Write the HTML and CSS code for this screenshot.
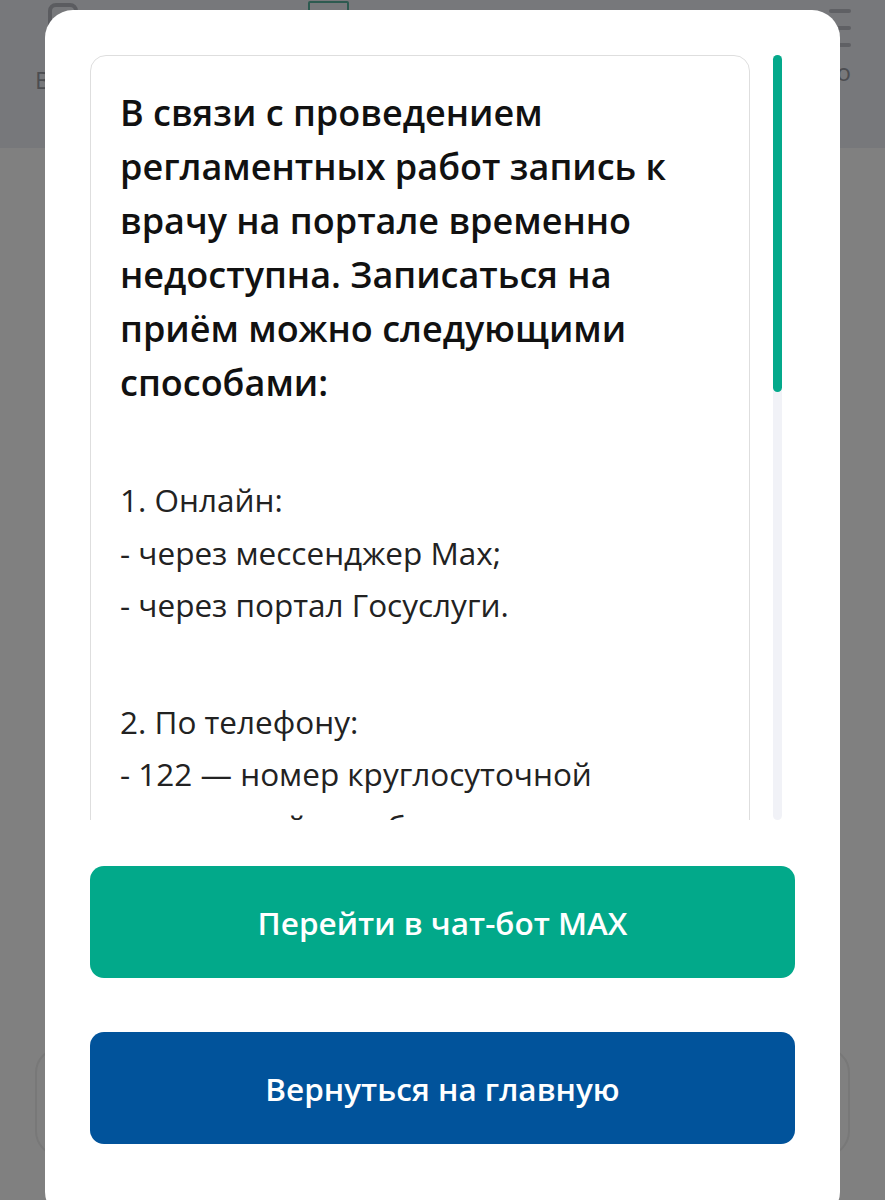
FILE: index.html
```html
<!DOCTYPE html>
<html lang="ru">
<head>
  <meta charset="UTF-8" />
  <title>Запись к врачу</title>
  <meta name="viewport" content="width=device-width, initial-scale=1.0">
  <link rel="stylesheet" href="styles.css">
</head>

<body>
  <!-- Страница под модальным окном (затемнена) -->
  <div class="page">
    <header class="topbar">
      <div class="nav-item nav-left">
        <span class="nav-icon"></span>
        <span class="nav-label">Вход</span>
      </div>
      <div class="nav-item nav-center">
        <span class="nav-icon nav-icon-green"></span>
      </div>
      <div class="nav-item nav-right">
        <span class="burger"><i></i><i></i><i></i></span>
        <span class="nav-label">Инфо</span>
      </div>
    </header>
    <main class="main">
      <div class="search-card"></div>
    </main>
  </div>

  <!-- Модальное окно -->
  <div class="overlay">
    <div class="modal">
      <div class="modal-body">
        <div class="scroll-view">
          <div class="notice">
            <h1 class="notice-title">В связи с проведением регламентных работ запись к врачу на портале временно недоступна. Записаться на приём можно следующими способами:</h1>
            <p>1. Онлайн:<br>- через мессенджер Max;<br>- через портал Госуслуги.</p>
            <p>2. По телефону:<br>- 122 — номер круглосуточной справочной службы;<br>- телефон регистратуры поликлиники.</p>
          </div>
        </div>
        <div class="scrollbar"><div class="scrollbar-thumb"></div></div>
      </div>
      <button class="btn btn-green">Перейти в чат-бот MAX</button>
      <button class="btn btn-blue">Вернуться на главную</button>
    </div>
  </div>
</body>
</html>
```

FILE: styles.css
```css
/* Базовые стили */
* {
  box-sizing: border-box;
  margin: 0;
  padding: 0;
}
body {
  font-family: "Open Sans", "Noto Sans", Arial, sans-serif;
  background: #808080;
  color: #1e1e1e;
  overflow: hidden;
  height: 1200px;
}

/* Страница под затемнением */
.topbar {
  height: 148px;
  background: #77787b;
  display: flex;
  align-items: flex-start;
  padding: 0 34px 0 35px;
}
.nav-item {
  display: flex;
  flex-direction: column;
  align-items: center;
}
.nav-left {
  width: 250px;
  align-items: flex-start;
}
.nav-left .nav-icon {
  margin-left: 13px;
}
.nav-center {
  width: 86px;
}
.nav-icon {
  width: 30px;
  height: 30px;
  margin-top: 3px;
  border: 4px solid #5b5c60;
  border-radius: 8px;
}
.nav-icon-green {
  width: 41px;
  height: 40px;
  margin-top: 1px;
  border: 2px solid #2d5a50;
  border-radius: 2px;
}
.nav-label {
  margin-top: 30px;
  font-size: 24px;
  color: #4c4d51;
}
.nav-right {
  margin-left: auto;
  align-items: flex-end;
}
.nav-right .nav-label {
  margin-top: 8px;
}
.burger {
  display: flex;
  flex-direction: column;
  gap: 13px;
  margin-top: 9px;
  align-items: flex-end;
}
.burger i {
  display: block;
  width: 18px;
  height: 4px;
  border-radius: 2px;
  background: #5f6064;
}
.burger i:first-child {
  width: 22px;
}

.main {
  padding: 899px 35px 0 35px;
}
.search-card {
  height: 110px;
  border: 2px solid #787878;
  border-radius: 26px;
}

/* Модальное окно */
.overlay {
  position: fixed;
  inset: 0;
}
.modal {
  position: absolute;
  left: 45px;
  top: 10px;
  width: 795px;
  background: #fff;
  border-radius: 28px;
  padding: 45px 45px 76px 45px;
}
.modal-body {
  display: flex;
  gap: 23px;
  height: 765px;
  padding-right: 13px;
}
.scroll-view {
  flex: 1;
  overflow: hidden;
}
.notice {
  border: 1px solid #dedede;
  border-radius: 16px;
  padding: 30px 29px 40px 29px;
}
.notice-title {
  font-size: 36px;
  font-weight: 600;
  line-height: 54px;
  color: #111;
  margin-bottom: 64px;
}
.notice p {
  font-size: 31.5px;
  line-height: 52.5px;
  color: #222;
  margin-bottom: 64px;
}

/* Скроллбар */
.scrollbar {
  width: 9px;
  background: #f1f2f7;
  border-radius: 5px;
}
.scrollbar-thumb {
  height: 337px;
  background: #04a98b;
  border-radius: 5px;
}

/* Кнопки */
.btn {
  display: block;
  width: 100%;
  height: 112px;
  border: none;
  border-radius: 14px;
  font-family: inherit;
  font-size: 31.5px;
  font-weight: 600;
  color: #fff;
  cursor: pointer;
}
.btn-green {
  margin-top: 46px;
  background: #02a98a;
}
.btn-blue {
  margin-top: 54px;
  background: #01539b;
}
```
